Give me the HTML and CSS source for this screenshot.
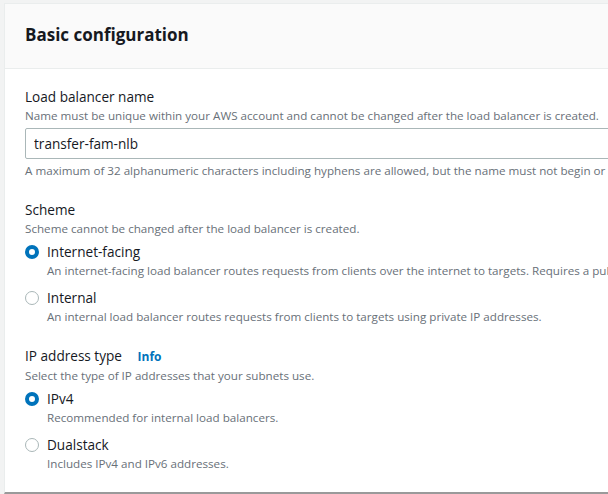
FILE: index.html
```html
<!DOCTYPE html>
<html lang="en">
<head>
    <meta charset="UTF-8">
    <title>Basic configuration</title>
    <link rel="stylesheet" href="styles.css">
</head>
<body>
    <div class="panel">
        <div class="panel-header">
            <h2>Basic configuration</h2>
        </div>
        <div class="panel-body">
            <div class="field">
                <div class="label">Load balancer name</div>
                <div class="desc">Name must be unique within your AWS account and cannot be changed after the load balancer is created.</div>
                <input class="text-input" type="text" value="transfer-fam-nlb">
                <div class="hint">A maximum of 32 alphanumeric characters including hyphens are allowed, but the name must not begin or end with a hyphen.</div>
            </div>

            <div class="field">
                <div class="label">Scheme</div>
                <div class="desc">Scheme cannot be changed after the load balancer is created.</div>
                <div class="radio-group">
                    <label class="radio">
                        <span class="dot checked"></span>
                        <span class="radio-text">
                            <span class="radio-title">Internet-facing</span>
                            <span class="radio-desc">An internet-facing load balancer routes requests from clients over the internet to targets. Requires a public subnet.</span>
                        </span>
                    </label>
                    <label class="radio">
                        <span class="dot"></span>
                        <span class="radio-text">
                            <span class="radio-title">Internal</span>
                            <span class="radio-desc">An internal load balancer routes requests from clients to targets using private IP addresses.</span>
                        </span>
                    </label>
                </div>
            </div>

            <div class="field">
                <div class="label">IP address type <a class="info" href="#">Info</a></div>
                <div class="desc">Select the type of IP addresses that your subnets use.</div>
                <div class="radio-group">
                    <label class="radio">
                        <span class="dot checked"></span>
                        <span class="radio-text">
                            <span class="radio-title">IPv4</span>
                            <span class="radio-desc">Recommended for internal load balancers.</span>
                        </span>
                    </label>
                    <label class="radio">
                        <span class="dot"></span>
                        <span class="radio-text">
                            <span class="radio-title">Dualstack</span>
                            <span class="radio-desc">Includes IPv4 and IPv6 addresses.</span>
                        </span>
                    </label>
                </div>
            </div>
        </div>
    </div>
</body>
</html>
```

FILE: styles.css
```css
body {
    margin: 0;
    padding: 3px 0 0 4px;
    background-color: #f2f3f3;
    font-family: "Open Sans", "Noto Sans", sans-serif;
    color: #16191f;
    overflow: hidden;
}
.panel {
    width: 900px;
    background-color: #fff;
    border: 1px solid #eaeded;
    border-right: none;
    border-bottom: 2px solid #9a9a9a;
    box-sizing: border-box;
}
.panel-header {
    background-color: #fafafa;
    border-bottom: 1px solid #eaeded;
    padding: 17px 20px 20px;
}
.panel-header h2 {
    margin: 0;
    font-size: 17px;
    font-weight: 700;
    line-height: 27px;
}
.panel-body {
    padding: 18px 20px 19px;
}
.field {
    margin-bottom: 20px;
}
.field:last-child {
    margin-bottom: 0;
}
.label {
    font-size: 13.6px;
    line-height: 20px;
}
.info {
    color: #0073bb;
    font-weight: 700;
    font-size: 12px;
    text-decoration: none;
    margin-left: 12px;
}
.desc, .hint, .radio-desc {
    font-size: 11.65px;
    line-height: 18px;
    color: #687078;
    white-space: nowrap;
}
.text-input {
    display: block;
    margin-top: 3px;
    width: 640px;
    height: 31px;
    box-sizing: border-box;
    border: 1px solid #aab7b8;
    border-radius: 2px;
    padding: 0 8px;
    font-family: inherit;
    font-size: 13.6px;
    color: #16191f;
}
.hint {
    margin-top: 3px;
}
.radio-group {
    margin-top: 4px;
    display: flex;
    flex-direction: column;
    gap: 8px;
}
.radio {
    display: flex;
    gap: 8px;
    align-items: flex-start;
}
.dot {
    width: 14px;
    height: 14px;
    margin-top: 3px;
    border-radius: 50%;
    border: 1px solid #aab7b8;
    box-sizing: border-box;
    flex-shrink: 0;
}
.dot.checked {
    border: 4px solid #0073bb;
}
.radio-text {
    display: flex;
    flex-direction: column;
}
.radio-title {
    font-size: 13.6px;
    line-height: 20px;
}
```
